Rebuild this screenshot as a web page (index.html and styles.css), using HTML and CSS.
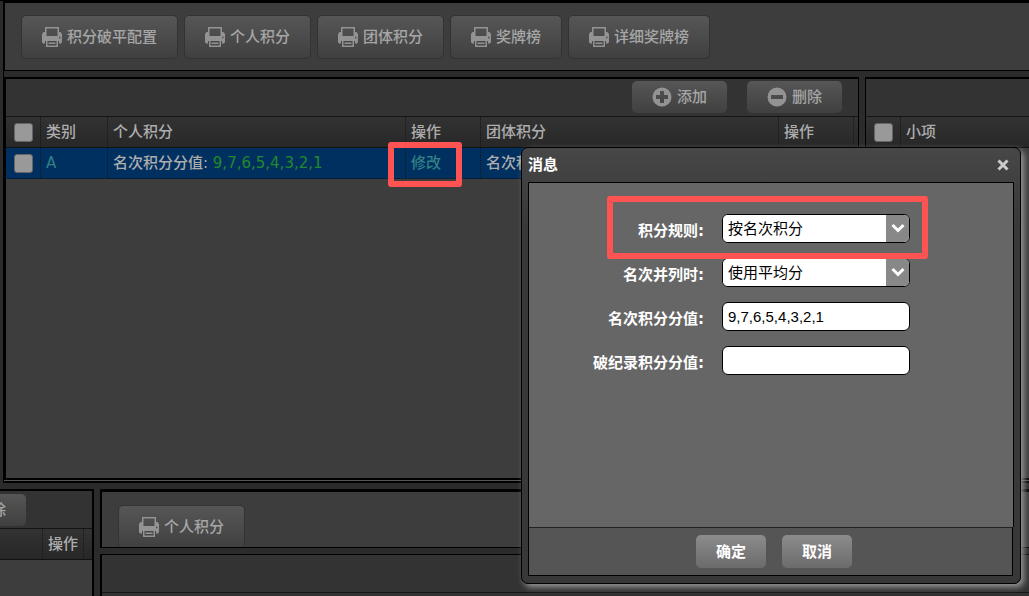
FILE: index.html
```html
<!DOCTYPE html>
<html lang="zh-CN">
<head>
<meta charset="utf-8">
<title>积分管理</title>
<link rel="stylesheet" href="styles.css">
</head>
<body>
<svg class="defs" aria-hidden="true">
  <symbol id="printer" viewBox="0 0 20 20">
    <path fill="currentColor" fill-rule="evenodd" d="M3 0H17V9H3ZM4.500 1.500V9H15.500V1.500Z"/>
    <path fill="currentColor" fill-rule="evenodd" d="M1.500 5H3V9H17V5H18.500L20 7V15L19 16.500H17V13H3V16.500H1L0 15V7ZM16.500 9.700V11.300H18.500V9.700Z"/>
    <path fill="currentColor" fill-rule="evenodd" d="M4 13H5.500V18.500H14.500V13H16V20H4Z"/>
    <path fill="currentColor" d="M3 9H17V14H3ZM6.500 15.500H13.500V17H6.500Z"/>
  </symbol>
  <symbol id="plus" viewBox="0 0 20 20">
    <path fill="currentColor" fill-rule="evenodd" d="M10 .5a9.500 9.500 0 1 0 0 19a9.500 9.500 0 1 0 0-19ZM8 4H12V8H16V12H12V16H8V12H4V8H8Z"/>
  </symbol>
  <symbol id="minus" viewBox="0 0 20 20">
    <path fill="currentColor" fill-rule="evenodd" d="M10 .5a9.500 9.500 0 1 0 0 19a9.500 9.500 0 1 0 0-19ZM4 8H16V12H4Z"/>
  </symbol>
</svg>

<div class="page">
  <div class="upper">
    <div class="rail"></div>
    <div class="stage">
      <nav class="reports">
        <button class="btn report"><svg class="icon"><use href="#printer"/></svg>积分破平配置</button>
        <button class="btn report"><svg class="icon"><use href="#printer"/></svg>个人积分</button>
        <button class="btn report"><svg class="icon"><use href="#printer"/></svg>团体积分</button>
        <button class="btn report"><svg class="icon"><use href="#printer"/></svg>奖牌榜</button>
        <button class="btn report"><svg class="icon"><use href="#printer"/></svg>详细奖牌榜</button>
      </nav>
      <div class="split">
        <section class="panel categories">
          <div class="toolbar">
            <button class="btn"><svg class="icon"><use href="#plus"/></svg>添加</button>
            <button class="btn"><svg class="icon"><use href="#minus"/></svg>删除</button>
          </div>
          <table class="grid">
            <colgroup><col class="c-check"><col class="c-type"><col class="c-score"><col class="c-op"><col class="c-score"><col class="c-op"><col></colgroup>
            <thead>
              <tr><th><input type="checkbox" aria-label="全选"></th><th>类别</th><th>个人积分</th><th>操作</th><th>团体积分</th><th>操作</th><th></th></tr>
            </thead>
            <tbody>
              <tr class="selected"><td><input type="checkbox" aria-label="选择 A"></td><td><a class="link" href="#">A</a></td><td>名次积分分值: <span class="points">9,7,6,5,4,3,2,1</span></td><td><a class="link" href="#">修改</a></td><td>名次积</td><td></td><td></td></tr>
            </tbody>
          </table>
        </section>
        <section class="panel events">
          <div class="toolbar"></div>
          <table class="grid">
            <colgroup><col class="c-check"><col></colgroup>
            <thead><tr><th><input type="checkbox" aria-label="全选小项"></th><th>小项</th></tr></thead>
          </table>
        </section>
      </div>
    </div>
  </div>

  <div class="lower">
    <section class="panel side">
      <div class="toolbar"><button class="btn"><svg class="icon"><use href="#minus"/></svg>删除</button></div>
      <table class="grid">
        <colgroup><col class="c-lead"><col class="c-short"><col></colgroup>
        <thead><tr><th></th><th>操作</th><th></th></tr></thead>
      </table>
    </section>
    <div class="detail">
      <div class="reports clipped">
        <button class="btn report"><svg class="icon"><use href="#printer"/></svg>个人积分</button>
      </div>
      <section class="panel results">
        <div class="toolbar"></div>
        <div class="headstrip"></div>
      </section>
    </div>
  </div>

  <div class="mark mark-edit"></div>

  <form class="dialog" role="dialog" aria-labelledby="dialog-title">
    <header class="dialog-head">
      <h1 id="dialog-title">消息</h1>
      <button type="button" class="close" aria-label="关闭"><svg viewBox="0 0 12 12"><path d="M1.500 1.500L10.500 10.500M10.500 1.500L1.500 10.500"/></svg></button>
    </header>
    <div class="dialog-body">
      <label for="rule">积分规则:</label>
      <div class="combo"><select id="rule"><option>按名次积分</option></select><span class="arrow"><svg viewBox="0 0 14 10"><path d="M1.500 2L7 7.500L12.500 2"/></svg></span></div>
      <label for="tie">名次并列时:</label>
      <div class="combo"><select id="tie"><option>使用平均分</option></select><span class="arrow"><svg viewBox="0 0 14 10"><path d="M1.500 2L7 7.500L12.500 2"/></svg></span></div>
      <label for="points">名次积分分值:</label>
      <input class="field" id="points" type="text" value="9,7,6,5,4,3,2,1">
      <label for="record">破纪录积分分值:</label>
      <input class="field" id="record" type="text">
    </div>
    <footer class="dialog-foot">
      <button type="button" class="action">确定</button>
      <button type="button" class="action">取消</button>
    </footer>
  </form>

  <div class="mark mark-rule"></div>
</div>
</body>
</html>
```

FILE: styles.css
```css
* { box-sizing: border-box; }

body {
  margin: 0;
  background: #000;
  color: #adadad;
  font: 500 15px/20px "DejaVu Sans", "Noto Sans CJK SC", sans-serif;
}

button, input, select { font: inherit; }

.defs { position: absolute; width: 0; height: 0; }

.page {
  position: relative;
  display: flex;
  flex-direction: column;
  height: 100vh;
  overflow: hidden;
}

.upper { display: flex; flex: 1; min-height: 0; }
.rail { width: 3px; margin-top: 1px; background: #2b2b2b; }

.stage {
  flex: 1;
  display: flex;
  flex-direction: column;
  min-width: 0;
  margin-left: 1px;
  border-bottom: 2px solid #000;
  background: #2b2b2b;
}

.reports {
  display: flex;
  gap: 6px;
  padding: 12px 16px 11px;
  border: solid #000;
  border-width: 3px 0 1px 1px;
  background: #3d3d3d;
}

.btn {
  display: flex;
  align-items: center;
  gap: 5px;
  flex: none;
  height: 32px;
  padding: 0 20px;
  border: 0;
  border-radius: 5px;
  background: linear-gradient(#565656, #404040);
  color: #a6a6a6;
  white-space: nowrap;
}

.btn.report { height: 44px; border: 1px solid #333; }
.icon { width: 20px; height: 20px; color: #939393; }

.split {
  flex: 1;
  display: flex;
  gap: 6px;
  margin-top: 6px;
  min-height: 0;
  border-bottom: 1px solid #555;
}

.panel { background: #3d3d3d; overflow: hidden; }
.categories { flex: 1; border: solid #000; border-width: 2px 1px 2px 2px; }
.events { flex: 0 0 164px; border: solid #000; border-width: 2px 0 2px 1px; }

.toolbar {
  display: flex;
  justify-content: flex-end;
  gap: 20px;
  height: 37px;
  padding: 2px 16px;
  background: #333;
}

.grid { width: 100%; table-layout: fixed; border-collapse: separate; border-spacing: 0; }
.c-check { width: 35px; }
.c-type { width: 67px; }
.c-score { width: 298px; }
.c-op { width: 75px; }
.c-lead { width: 43px; }
.c-short { width: 41px; }

th, td {
  height: 31px;
  padding: 0 5px;
  border-right: 1px dotted #151515;
  font-weight: 500;
  text-align: left;
  white-space: nowrap;
  overflow: hidden;
}

th:last-child, td:last-child { border-right: 0; }
th { height: 32px; border-top: 1px solid #151515; border-bottom: 1px solid #111; }
td { border-bottom: 1px dotted #111; }
th:first-child, td:first-child { padding: 0 8px; }
thead tr, .headstrip { background: linear-gradient(#333, #272727); }
.selected { background: #003060; }

.link { color: #308184; text-decoration: none; }
.points { color: #218a2c; }

input[type="checkbox"] {
  appearance: none;
  display: block;
  width: 19px;
  height: 19px;
  margin: 0;
  border: 1px solid #666;
  border-radius: 3px;
  background: #999;
}

.lower {
  display: flex;
  flex: 0 0 113px;
  gap: 6px;
  min-height: 0;
  padding-top: 6px;
  overflow: hidden;
  background: #2b2b2b;
}

.side { flex: 0 0 94px; border: solid #000; border-width: 2px 2px 0 0; }
.side .toolbar { padding-top: 3px; padding-right: 66px; }
.detail { flex: 1; display: flex; flex-direction: column; gap: 6px; min-width: 0; }

.clipped {
  flex: none;
  height: 59px;
  padding-top: 13px;
  overflow: hidden;
  border-left-width: 2px;
}

.results { flex: none; border: solid #000; border-width: 1px 0 0 2px; }
.headstrip { height: 32px; border-top: 1px solid #151515; }

.dialog {
  position: absolute;
  top: 147px;
  left: 521px;
  width: 500px;
  padding: 0 6px 7px;
  border: 1px solid #000;
  border-radius: 7px;
  background: linear-gradient(#474747, #383838 80px);
  box-shadow: 3px 3px 6px #999;
  color: #fff;
}

.dialog-head { display: flex; align-items: center; justify-content: space-between; height: 34px; }
.dialog-head h1 { margin: 0; font-size: 15px; line-height: 20px; font-weight: bold; }
.close { display: flex; margin-right: 5px; padding: 0; border: 0; background: none; }
.close svg { width: 12px; height: 12px; fill: none; stroke: #ccc; stroke-width: 3; }

.dialog-body {
  display: grid;
  grid-template-columns: 175px 188px;
  grid-auto-rows: 29px;
  gap: 15px 18px;
  align-content: start;
  min-height: 345px;
  padding: 31px 0;
  border: 1px solid #000;
  border-bottom: 0;
  background: #666;
}

.dialog-body label { padding-top: 7px; text-align: right; font-weight: bold; }

.combo {
  display: flex;
  overflow: hidden;
  border: 1px solid #000;
  border-radius: 6px;
  background: #fff;
}

select {
  flex: 1;
  appearance: none;
  min-width: 0;
  padding: 0 5px;
  border: 0;
  background: #fff;
  color: #000;
  font-weight: normal;
}

.arrow { display: flex; justify-content: center; width: 23px; padding-top: 8px; background: #888; }
.arrow svg { width: 14px; height: 10px; fill: none; stroke: #fff; stroke-width: 3; }

.field {
  width: 100%;
  padding: 0 5px;
  border: 1px solid #000;
  border-radius: 6px;
  background: #fff;
  color: #000;
  font-family: "Liberation Sans", "Noto Sans CJK SC", sans-serif;
  font-weight: normal;
}

.dialog-foot {
  display: flex;
  justify-content: center;
  gap: 16px;
  margin-right: 1px;
  padding: 7px 0 7px 7px;
  border: 1px solid #000;
  border-top-color: #222;
  background: #555;
}

.action {
  width: 70px;
  height: 33px;
  padding: 0;
  border: 0;
  border-radius: 5px;
  background: linear-gradient(#8c8c8c, #6b6b6b);
  color: #fff;
  font-weight: bold;
}

.mark { position: absolute; border: 6px solid #fd5353; border-radius: 3px; pointer-events: none; }
.mark-edit { top: 142px; left: 388px; width: 74px; height: 45px; }
.mark-rule { top: 196px; left: 607px; width: 321px; height: 63px; }
```
